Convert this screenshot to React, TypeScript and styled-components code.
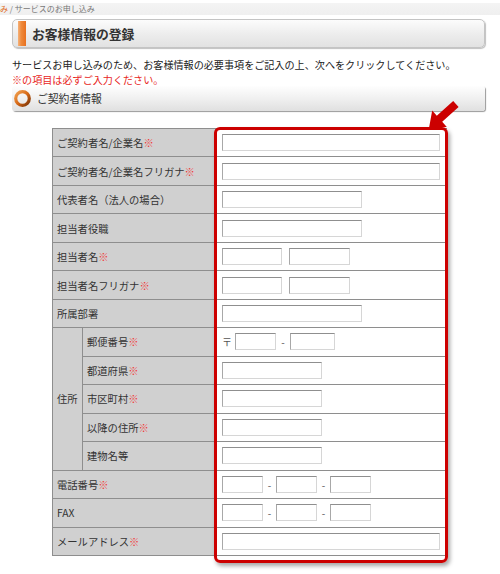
import React from "react";
import styled, { createGlobalStyle } from "styled-components";

const Global = createGlobalStyle`
  html, body { margin: 0; padding: 0; background: #fff; }
  body { font-family: "Noto Sans CJK JP", "Noto Sans", sans-serif; color: #333; width: 500px; height: 574px; overflow: hidden; }
`;

const Page = styled.div`
  width: 500px;
  padding-top: 3px;
`;

const Crumb = styled.div`
  height: 12px;
  background: linear-gradient(#f4f4f4, #efefef);
  font-size: 8px;
  line-height: 12px;
  color: #777;
  white-space: nowrap;
  span { color: #e06a1a; }
`;

const TitleBar = styled.div`
  margin: 4px 15px 0 12px;
  height: 29px;
  box-sizing: border-box;
  border: 1px solid #c4c4c4;
  border-radius: 5px;
  background: linear-gradient(#fcfcfc, #ececec 55%, #e2e2e2);
  box-shadow: 1px 1px 1px rgba(0, 0, 0, 0.25);
  display: flex;
  align-items: center;
  padding-left: 5px;
  gap: 6px;
`;

const Stripe = styled.div`
  width: 8px;
  height: 25px;
  background: linear-gradient(90deg, #f5b27a, #ee8a3c 40%, #e8701f);
`;

const Title = styled.h1`
  margin: 0;
  font-size: 12.8px;
  font-weight: bold;
  color: #333;
`;

const Desc = styled.p<{ $red?: boolean; $top: number }>`
  margin: ${(p) => p.$top}px 0 0 12px;
  font-size: 10.1px;
  line-height: 13px;
  height: 13px;
  color: ${(p) => (p.$red ? "#e8261c" : "#222")};
  white-space: nowrap;
`;

const Section = styled.div`
  margin: 0 15px 0 12px;
  height: 25px;
  border-radius: 3px;
  background: linear-gradient(#fefefe, #f0f0f0 50%, #e0e0e0);
  box-shadow: 1px 1px 1px #9a9a9a;
  display: flex;
  align-items: center;
  padding-left: 1px;
  gap: 5px;
  font-size: 10.8px;
  color: #333;
`;

const Wrap = styled.div`
  position: relative;
  margin: 17px 0 0 52px;
  width: 395px;
`;

const Grid = styled.div`
  display: grid;
  grid-template-columns: 29px 132px 231px;
  grid-template-rows: repeat(15, 1fr);
  height: 428px;
  box-sizing: border-box;
  gap: 1px;
  padding: 1px;
  background: #8e8e8e;
`;

const Label = styled.div<{ $col: string; $span?: number }>`
  grid-column: ${(p) => p.$col};
  ${(p) => (p.$span ? `grid-row: span ${p.$span};` : "")}
  background: #d0d0d0;
  display: flex;
  align-items: center;
  padding-left: 4px;
  font-size: 10.3px;
  color: #333;
  white-space: nowrap;
  b { color: #f03a3a; font-weight: normal; }
`;

const Field = styled.div`
  grid-column: 3;
  background: #fff;
  display: flex;
  align-items: center;
  padding-left: 6px;
  font-size: 10px;
  color: #555;
`;

const Input = styled.input<{ $w: number }>`
  width: ${(p) => p.$w}px;
  height: 17px;
  box-sizing: border-box;
  margin: 0;
  padding: 0;
  border: 1px solid;
  border-color: #8f8f8f #d6d6d6 #d6d6d6 #a8a8a8;
  background: #fff;
  outline: none;
`;

const Sep = styled.span<{ $w: number }>`
  width: ${(p) => p.$w}px;
  text-align: center;
  font-size: 10px;
  color: #555;
`;

const RedBox = styled.div`
  position: absolute;
  left: 162px;
  top: -1px;
  width: 234px;
  height: 436px;
  box-sizing: border-box;
  border: 3px solid #cc0000;
  border-radius: 6px;
  box-shadow: 2px 3px 4px rgba(0, 0, 0, 0.35);
  pointer-events: none;
`;

const Arrow = styled.svg`
  position: absolute;
  left: 368px;
  top: -33px;
  width: 45px;
  height: 40px;
  overflow: visible;
`;

const Ring = () => (
  <svg width="19" height="19" viewBox="0 0 19 19">
    <defs>
      <linearGradient id="rg" x1="0" y1="0" x2="1" y2="1">
        <stop offset="0" stopColor="#f0a050" />
        <stop offset="0.5" stopColor="#d86a18" />
        <stop offset="1" stopColor="#7a3408" />
      </linearGradient>
    </defs>
    <circle cx="9.5" cy="9.5" r="6.8" fill="none" stroke="url(#rg)" strokeWidth="3.2" />
  </svg>
);

const Req = () => <b>※</b>;

export default function App() {
  return (
    <Page>
      <Global />
      <Crumb>
        <span>み</span> / サービスのお申し込み
      </Crumb>
      <TitleBar>
        <Stripe />
        <Title>お客様情報の登録</Title>
      </TitleBar>
      <Desc $top={10.4}>
        サービスお申し込みのため、お客様情報の必要事項をご記入の上、次へをクリックしてください。
      </Desc>
      <Desc $top={1.6} $red>
        ※の項目は必ずご入力ください。
      </Desc>
      <Section>
        <Ring />
        ご契約者情報
      </Section>
      <Wrap>
        <Grid>
          <Label $col="1 / 3">ご契約者名/企業名<Req /></Label>
          <Field><Input $w={218} /></Field>

          <Label $col="1 / 3">ご契約者名/企業名フリガナ<Req /></Label>
          <Field><Input $w={218} /></Field>

          <Label $col="1 / 3">代表者名（法人の場合）</Label>
          <Field><Input $w={140} /></Field>

          <Label $col="1 / 3">担当者役職</Label>
          <Field><Input $w={140} /></Field>

          <Label $col="1 / 3">担当者名<Req /></Label>
          <Field><Input $w={60} /><Sep $w={7} /><Input $w={61} /></Field>

          <Label $col="1 / 3">担当者名フリガナ<Req /></Label>
          <Field><Input $w={60} /><Sep $w={7} /><Input $w={61} /></Field>

          <Label $col="1 / 3">所属部署</Label>
          <Field><Input $w={140} /></Field>

          <Label $col="1" $span={5}>住所</Label>
          <Label $col="2">郵便番号<Req /></Label>
          <Field>〒<Sep $w={3} /><Input $w={41} /><Sep $w={14}>-</Sep><Input $w={45} /></Field>

          <Label $col="2">都道府県<Req /></Label>
          <Field><Input $w={100} /></Field>

          <Label $col="2">市区町村<Req /></Label>
          <Field><Input $w={100} /></Field>

          <Label $col="2">以降の住所<Req /></Label>
          <Field><Input $w={100} /></Field>

          <Label $col="2">建物名等</Label>
          <Field><Input $w={100} /></Field>

          <Label $col="1 / 3">電話番号<Req /></Label>
          <Field><Input $w={41} /><Sep $w={13}>-</Sep><Input $w={41} /><Sep $w={13}>-</Sep><Input $w={41} /></Field>

          <Label $col="1 / 3">FAX</Label>
          <Field><Input $w={41} /><Sep $w={13}>-</Sep><Input $w={41} /><Sep $w={13}>-</Sep><Input $w={41} /></Field>

          <Label $col="1 / 3">メールアドレス<Req /></Label>
          <Field><Input $w={218} /></Field>
        </Grid>
        <RedBox />
        <Arrow viewBox="0 0 45 40">
          <polygon
            points="9,33 12.2,15.5 16.8,20.7 33.2,6.1 38.6,12.1 22.2,26.7 26.8,31.9"
            fill="#cc0000"
          />
        </Arrow>
      </Wrap>
    </Page>
  );
}
